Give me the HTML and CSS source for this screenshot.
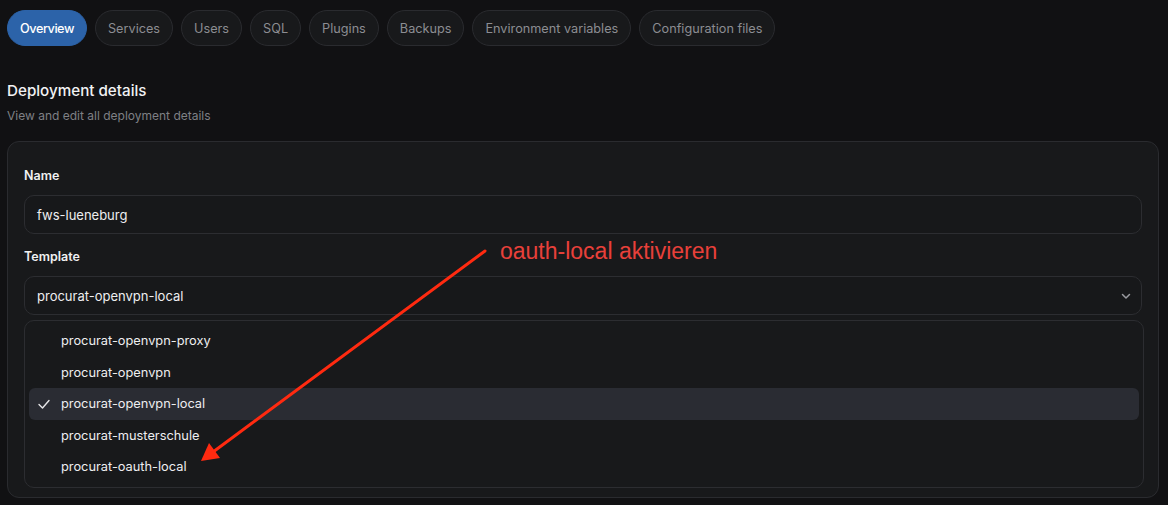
FILE: index.html
```html
<!DOCTYPE html>
<html>
<head>
<meta charset="utf-8">
<link rel="stylesheet" href="styles.css">
</head>
<body>
<div class="page">
  <nav class="tabs">
    <span class="tab active">Overview</span>
    <span class="tab">Services</span>
    <span class="tab">Users</span>
    <span class="tab">SQL</span>
    <span class="tab">Plugins</span>
    <span class="tab">Backups</span>
    <span class="tab">Environment variables</span>
    <span class="tab">Configuration files</span>
  </nav>
  <header class="head">
    <h1 class="title">Deployment details</h1>
    <p class="subtitle">View and edit all deployment details</p>
  </header>
  <section class="card">
    <label class="label">Name</label>
    <div class="input">fws-lueneburg</div>
    <label class="label second">Template</label>
    <div class="input select">
      <span>procurat-openvpn-local</span>
      <svg class="chev" width="12" height="12" viewBox="0 0 12 12"><path d="M2.5 4.5 L6 8 L9.5 4.5" fill="none" stroke="#9a9ba0" stroke-width="1.5" stroke-linecap="round" stroke-linejoin="round"/></svg>
    </div>
    <ul class="menu">
      <li class="item">procurat-openvpn-proxy</li>
      <li class="item">procurat-openvpn</li>
      <li class="item selected"><svg class="check" width="14" height="14" viewBox="0 0 14 14"><path d="M2 7.5 L5.5 11 L12 3.5" fill="none" stroke="#e6e6e8" stroke-width="1.4" stroke-linecap="round" stroke-linejoin="round"/></svg>procurat-openvpn-local</li>
      <li class="item">procurat-musterschule</li>
      <li class="item">procurat-oauth-local</li>
    </ul>
  </section>
  <div class="note">oauth-local aktivieren</div>
  <svg class="arrow" width="1168" height="505" viewBox="0 0 1168 505">
    <line x1="485" y1="251" x2="213" y2="452" stroke="#ff2a10" stroke-width="3" stroke-linecap="round"/>
    <polygon points="201,461 209,443 220,458" fill="#ff2a10"/>
  </svg>
</div>
</body>
</html>
```
FILE: styles.css
```css
* { box-sizing: border-box; }
html, body { margin: 0; padding: 0; }
body {
  background: #111113;
  font-family: Inter, "Noto Sans", sans-serif;
  color: #ededef;
  width: 1168px;
  height: 505px;
  overflow: hidden;
}
.page {
  position: relative;
  padding: 10px 10px 0 7px;
}
.tabs {
  display: flex;
  gap: 8px;
}
.tab {
  height: 36px;
  padding: 0 12px;
  border-radius: 18px;
  border: 1px solid #2a2b2f;
  background: #18191b;
  color: #8c8d92;
  font-size: 12.7px;
  display: flex;
  align-items: center;
}
.tab.active {
  background: #2c63a9;
  border-color: #2c63a9;
  color: #ffffff;
  font-weight: 500;
  letter-spacing: -0.45px;
}
.head { margin-top: 35px; }
.title {
  margin: 0;
  font-size: 15.2px;
  font-weight: 500;
  line-height: 20px;
  color: #f2f2f4;
}
.subtitle {
  margin: 7px 0 0;
  font-size: 12px;
  line-height: 16px;
  color: #7f8085;
}
.card {
  margin-top: 17px;
  width: 1152px;
  border: 1px solid #2a2b2f;
  border-radius: 12px;
  background: #18191b;
  padding: 24px 16px 9px 16px;
}
.label {
  display: block;
  font-size: 12.5px;
  font-weight: 600;
  line-height: 20px;
  color: #f0f0f2;
  margin-bottom: 9px;
}
.label.second { margin-top: 13px; }
.input {
  height: 39px;
  border: 1px solid #2c2d31;
  border-radius: 10px;
  background: #17181a;
  padding: 0 12px;
  display: flex;
  align-items: center;
  font-size: 13px;
  color: #eeeef0;
}
.select { justify-content: space-between; }
.chev { margin-right: -3px; }
.menu {
  list-style: none;
  margin: 5px 0 0;
  padding: 4px;
  border: 1px solid #2c2d31;
  border-radius: 10px;
  background: #18191b;
  width: 1120px;
}
.item {
  height: 31.5px;
  display: flex;
  align-items: center;
  padding-left: 32px;
  font-size: 12.8px;
  color: #eeeef0;
  border-radius: 6px;
  position: relative;
}
.item.selected { background: #2a2c33; }
.check {
  position: absolute;
  left: 8px;
  top: 9px;
}
.note {
  position: absolute;
  left: 500px;
  top: 237px;
  font-family: "Liberation Sans", Arial, sans-serif;
  font-size: 23px;
  line-height: 28px;
  color: #e8403a;
}
.arrow {
  position: absolute;
  left: 0;
  top: 0;
  pointer-events: none;
}
```
